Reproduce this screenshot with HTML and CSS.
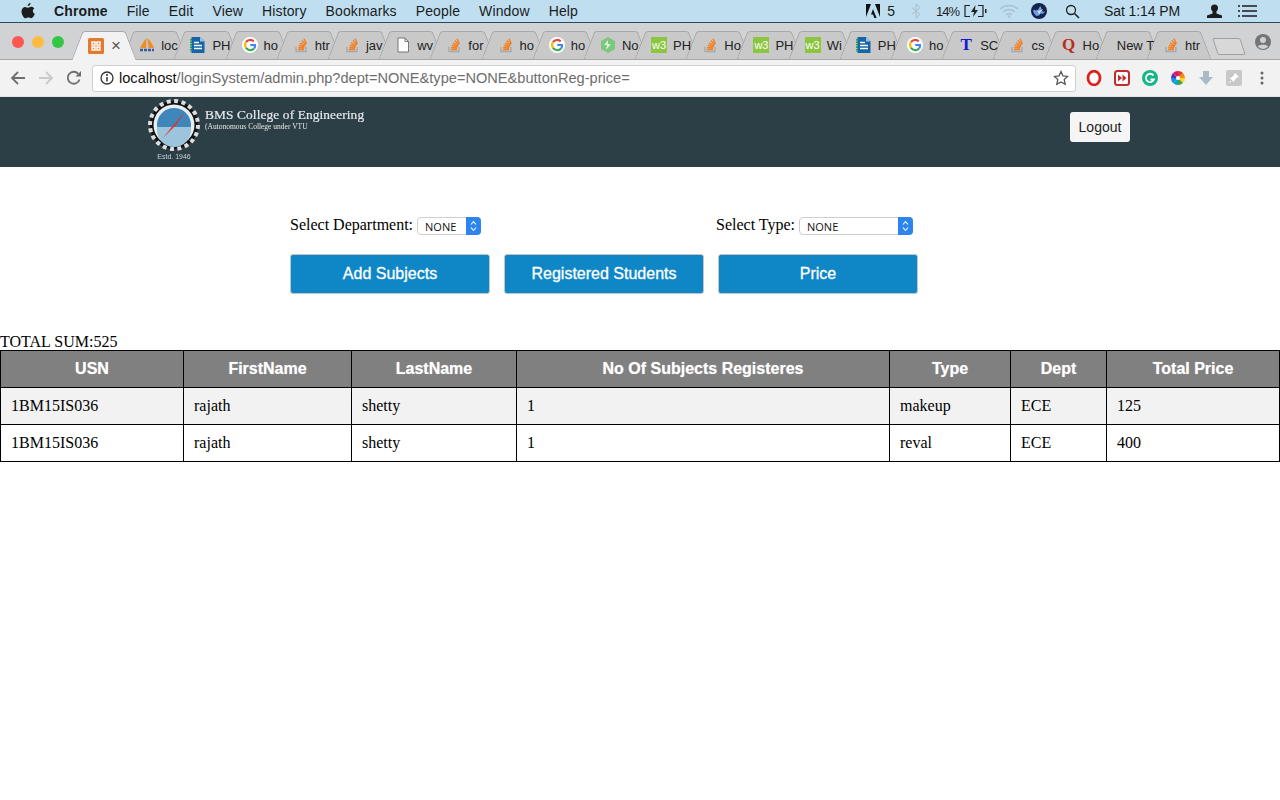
FILE: index.html
```html
<!DOCTYPE html>
<html lang="en">
  <head>
    <meta charset="UTF-8" />
    <title>Admin</title>
    <link rel="stylesheet" href="styles.css">
  </head>
  <body>
    <svg class="defs" width="0" height="0">
      <symbol id="i-so" viewBox="0 0 16 16">
        <path d="M3 10v4.500h10V10" fill="none" stroke="#a9a9a9" stroke-width="1.400"/>
        <path d="M5 12.600h6M5.200 10.400l6 .6M5.800 8.200l5.800 1.600M7 5.800l5.200 3M8.800 3.600l4 4.200M11 1.800l2.400 5" fill="none" stroke="#f48024" stroke-width="1.500"/>
      </symbol>
      <symbol id="i-g" viewBox="0 0 16 16">
        <circle cx="8" cy="8" r="8" fill="#fff"/>
        <path d="M11.700 4.400A5 5 0 0 0 4 5.200" fill="none" stroke="#ea4335" stroke-width="2.200"/>
        <path d="M4 5.200a5 5 0 0 0 0 5.600" fill="none" stroke="#fbbc05" stroke-width="2.200"/>
        <path d="M4 10.800a5 5 0 0 0 8.200.6" fill="none" stroke="#34a853" stroke-width="2.200"/>
        <path d="M12.200 11.400A5 5 0 0 0 13 8H8.200" fill="none" stroke="#4285f4" stroke-width="2.200"/>
      </symbol>
      <symbol id="i-doc" viewBox="0 0 16 16">
        <path d="M1.500 0H10l4.500 4.500V16H1.500z" fill="#1565a8"/>
        <path d="M10 0v4.500h4.500" fill="#9cc3e4"/>
        <path d="M4 5.500h5M4 8.500h8M4 11.500h8" stroke="#fff" stroke-width="1.300"/>
        <path d="M1 2v13" stroke="#1f9a58" stroke-width="2" stroke-dasharray="1.500 1"/>
      </symbol>
    </svg>

    <div class="menubar">
      <svg class="apple" viewBox="0 0 14 16" width="14" height="16">
        <path d="M9.600 0c.1 1.500-1.200 3.200-2.900 3.100C6.500 1.600 8 .1 9.600 0zM13.300 5.500c-2.100 1.300-1.800 4.300.5 5.300-.6 1.800-2.200 4.400-3.700 4.400-1 0-1.500-.6-2.700-.6s-1.800.6-2.700.6C2.800 15.200.5 11.500.5 8.400c0-2.900 1.900-4.500 3.700-4.500 1.200 0 2.100.8 2.900.8.800 0 1.800-.9 3.200-.9 1.100 0 2.300.6 3 1.700z" fill="#1c1c1c"/>
      </svg>
      <span class="menu-app">Chrome</span>
      <span>File</span>
      <span>Edit</span>
      <span>View</span>
      <span>History</span>
      <span>Bookmarks</span>
      <span>People</span>
      <span>Window</span>
      <span>Help</span>

      <div class="status">
        <svg class="st-adobe" viewBox="0 0 14 14" width="14" height="14"><path d="M0 0h5L0 13zM14 0H9l5 13zM7 5l3.600 9H8.300L7 10.500H5z" fill="#111"/></svg>
        <span class="st-five">5</span>
        <svg class="st-bt" viewBox="0 0 10 16" width="10" height="16"><path d="M1 4.500l8 7-4 3.500V1l4 3.500-8 7" fill="none" stroke="#a9bdc9" stroke-width="1"/></svg>
        <span class="st-pct">14%</span>
        <svg class="st-batt" viewBox="0 0 24 14" width="24" height="14"><path d="M7 1.500H2v11h5M15 1.500h5v11h-5" fill="none" stroke="#222" stroke-width="1.200"/><path d="M12.500 1L8 8h3l-1 5 5-7h-3z" fill="#222"/><path d="M22 5h1.500v4H22z" fill="#222"/></svg>
        <svg class="st-wifi" viewBox="0 0 20 14" width="20" height="14"><path d="M1 5a13 13 0 0 1 18 0M4 8a8.500 8.500 0 0 1 12 0M7 10.800a4 4 0 0 1 6 0" fill="none" stroke="#a9c0cd" stroke-width="1.500"/><circle cx="10" cy="12.500" r="1.300" fill="#a9c0cd"/></svg>
        <svg class="st-siri" viewBox="0 0 16 16" width="16" height="16"><circle cx="8" cy="8" r="8" fill="#16234a"/><path d="M2 8c2-4 3 3 6-3s2 7 6 3c-2 5-4 1-6 4S3 11 2 8z" fill="#6f9fe8"/><path d="M5 6c2 3 3 2 3 7 1-5 2-4 4-7-2 1-3 2-4 2S6 7 5 6z" fill="#e8e6f5"/></svg>
        <svg class="st-search" viewBox="0 0 15 15" width="15" height="15"><circle cx="6" cy="6" r="4.500" fill="none" stroke="#222" stroke-width="1.300"/><path d="M9.500 9.500L14 14" stroke="#222" stroke-width="1.600"/></svg>
        <span class="st-clock">Sat 1:14 PM</span>
        <svg class="st-user" viewBox="0 0 15 14" width="15" height="14"><circle cx="7.500" cy="4" r="3.500" fill="#1c1c1c"/><path d="M5.500 7h4v2.500l5.500 2V14H0v-2.500l5.500-2z" fill="#1c1c1c"/></svg>
        <svg class="st-list" viewBox="0 0 19 12" width="19" height="12"><path d="M0 1h2M4 1h15M0 6h2M4 6h15M0 11h2M4 11h15" stroke="#1c1c1c" stroke-width="1.500"/></svg>
      </div>
    </div>

    <div class="tabstrip">
      <div class="lights">
        <i class="light red"></i>
        <i class="light amber"></i>
        <i class="light green"></i>
      </div>
      <div class="tabs">
        <div class="tab active">
          <svg class="fav" viewBox="0 0 16 16"><rect width="16" height="16" rx="1.500" fill="#e8792c"/><path d="M4 4h3v3H4zM9 4h3v3H9zM4 9h3v3H4zM9 9h3v3H9z" fill="none" stroke="#fff" stroke-width="1.500"/></svg>
          <span class="tab-close">×</span>
        </div>
        <div class="tab">
          <svg class="fav" viewBox="0 0 16 16"><path d="M1 11C3 7 5 4 7.500 1c0 4 0 7-.5 10zM8.500 1c3 3 5 6 6.500 10H9.500z" fill="#ec8d28"/><path d="M1 13h14" stroke="#3d5a94" stroke-width="2.400" stroke-dasharray="3 1"/></svg>
          <span class="tab-title">loc</span>
        </div>
        <div class="tab"><svg class="fav"><use href="#i-doc"/></svg><span class="tab-title">PH</span></div>
        <div class="tab"><svg class="fav"><use href="#i-g"/></svg><span class="tab-title">ho</span></div>
        <div class="tab"><svg class="fav"><use href="#i-so"/></svg><span class="tab-title">htr</span></div>
        <div class="tab"><svg class="fav"><use href="#i-so"/></svg><span class="tab-title">jav</span></div>
        <div class="tab">
          <svg class="fav" viewBox="0 0 16 16"><path d="M3 1h7l3.500 3.500V15H3z" fill="#fff" stroke="#777"/><path d="M10 1v3.500h3.500" fill="none" stroke="#777"/></svg>
          <span class="tab-title">wv</span>
        </div>
        <div class="tab"><svg class="fav"><use href="#i-so"/></svg><span class="tab-title">for</span></div>
        <div class="tab"><svg class="fav"><use href="#i-so"/></svg><span class="tab-title">ho</span></div>
        <div class="tab"><svg class="fav"><use href="#i-g"/></svg><span class="tab-title">ho</span></div>
        <div class="tab">
          <svg class="fav" viewBox="0 0 16 16"><path d="M8 0l7 4v8l-7 4-7-4V4z" fill="#7dc67d"/><path d="M8 3L4 8h3l-1 5 5-6H8z" fill="#d8efd8"/></svg>
          <span class="tab-title">No</span>
        </div>
        <div class="tab"><i class="fav w3">w3</i><span class="tab-title">PH</span></div>
        <div class="tab"><svg class="fav"><use href="#i-so"/></svg><span class="tab-title">Ho</span></div>
        <div class="tab"><i class="fav w3">w3</i><span class="tab-title">PH</span></div>
        <div class="tab"><i class="fav w3">w3</i><span class="tab-title">Wi</span></div>
        <div class="tab"><svg class="fav"><use href="#i-doc"/></svg><span class="tab-title">PH</span></div>
        <div class="tab"><svg class="fav"><use href="#i-g"/></svg><span class="tab-title">ho</span></div>
        <div class="tab"><i class="fav fav-t">T</i><span class="tab-title">SC</span></div>
        <div class="tab"><svg class="fav"><use href="#i-so"/></svg><span class="tab-title">cs</span></div>
        <div class="tab"><i class="fav fav-q">Q</i><span class="tab-title">Ho</span></div>
        <div class="tab tab-plain"><span class="tab-title">New T</span></div>
        <div class="tab"><svg class="fav"><use href="#i-so"/></svg><span class="tab-title">htr</span></div>
      </div>
      <div class="newtab"></div>
      <svg class="profile" viewBox="0 0 16 16" width="16" height="16"><circle cx="8" cy="8" r="8" fill="#757575"/><circle cx="8" cy="6" r="3" fill="#d0d1d2"/><path d="M2.800 12.500c1-2.500 9.400-2.500 10.400 0A7 7 0 0 1 8 15a7 7 0 0 1-5.200-2.500z" fill="#d0d1d2"/></svg>
    </div>

    <div class="toolbar">
      <svg class="nav" viewBox="0 0 16 16" width="16" height="16"><path d="M15 8H2M8 2L2 8l6 6" fill="none" stroke="#6e6e6e" stroke-width="1.800"/></svg>
      <svg class="nav" viewBox="0 0 16 16" width="16" height="16"><path d="M1 8h13M8 2l6 6-6 6" fill="none" stroke="#c9c9c9" stroke-width="1.800"/></svg>
      <svg class="nav" viewBox="0 0 16 16" width="16" height="16"><path d="M13.500 9.500A6 6 0 1 1 12.300 3.800" fill="none" stroke="#6e6e6e" stroke-width="1.800"/><path d="M9.500 6.500H15V1z" fill="#6e6e6e"/></svg>
      <div class="omnibox">
        <svg class="info" viewBox="0 0 14 14" width="14" height="14"><circle cx="7" cy="7" r="6" fill="none" stroke="#333" stroke-width="1.300"/><path d="M7 6v4.500" stroke="#333" stroke-width="1.500"/><circle cx="7" cy="3.900" r="1" fill="#333"/></svg>
        <span class="url"><b>localhost</b>/loginSystem/admin.php?dept=NONE&amp;type=NONE&amp;buttonReg-price=</span>
        <svg class="star" viewBox="0 0 16 16" width="16" height="16"><path d="M8 1.500l2 4.400 4.700.5-3.500 3.200 1 4.700L8 11.900l-4.200 2.400 1-4.700L1.300 6.400 6 5.900z" fill="none" stroke="#555" stroke-width="1.300"/></svg>
      </div>
      <div class="extensions">
        <svg viewBox="0 0 16 16" width="16" height="16"><ellipse cx="8" cy="8" rx="6" ry="6.800" fill="#fff" stroke="#e0201c" stroke-width="2.800"/></svg>
        <svg viewBox="0 0 16 16" width="16" height="16"><rect x="1" y="1" width="14" height="14" rx="2.500" fill="#fff" stroke="#c22c2c" stroke-width="2"/><path d="M4 4.500l4 3.500-4 3.500zM8.500 4.500l4 3.500-4 3.500z" fill="#c22c2c"/></svg>
        <svg viewBox="0 0 16 16" width="16" height="16"><circle cx="8" cy="8" r="8" fill="#14b586"/><path d="M11.500 5.500A4.200 4.200 0 1 0 12 9.500H8.500" fill="none" stroke="#fff" stroke-width="1.800"/></svg>
        <svg viewBox="0 0 16 16" width="16" height="16"><path d="M8 8V1a7 7 0 0 1 5 2z" fill="#e53935"/><path d="M8 8l5-5a7 7 0 0 1 2 5z" fill="#fb8c00"/><path d="M8 8h7a7 7 0 0 1-2 5z" fill="#fdd835"/><path d="M8 8l5 5a7 7 0 0 1-5 2z" fill="#43a047"/><path d="M8 8v7a7 7 0 0 1-5-2z" fill="#00acc1"/><path d="M8 8l-5 5a7 7 0 0 1-2-5z" fill="#1e88e5"/><path d="M8 8H1a7 7 0 0 1 2-5z" fill="#5e35b1"/><path d="M8 8L3 3a7 7 0 0 1 5-2z" fill="#d81b60"/><circle cx="8" cy="8" r="2" fill="#fff"/></svg>
        <svg viewBox="0 0 16 16" width="16" height="16"><path d="M5 1h6v6h4l-7 8-7-8h4z" fill="#a9bcc6"/></svg>
        <svg viewBox="0 0 16 16" width="16" height="16"><rect width="16" height="16" rx="2" fill="#c8c8c8"/><path d="M9 3l4 4-2 .5-2.500 2.500-.5 2L3.500 8l2-.5L8 5z" fill="#fff"/><path d="M5 11l-2 2" stroke="#fff"/></svg>
        <svg viewBox="0 0 4 14" width="4" height="14"><circle cx="2" cy="2" r="1.500" fill="#666"/><circle cx="2" cy="7" r="1.500" fill="#666"/><circle cx="2" cy="12" r="1.500" fill="#666"/></svg>
      </div>
    </div>

    <header class="site-header">
      <div class="logo">
        <div class="logo-mark">
          <svg viewBox="0 0 54 54" width="54" height="54">
            <circle cx="27" cy="27" r="24" fill="#111" stroke="#ddd" stroke-width="4" stroke-dasharray="4 3.500"/>
            <circle cx="27" cy="27" r="20.500" fill="#e8edf0"/>
            <circle cx="27" cy="27" r="17" fill="#3f86bb"/>
            <path d="M10 29h34v3a17 17 0 0 1-34 0z" fill="#9cc4dc"/>
            <path d="M38 14L24 30l-8 10 13-13z" fill="#e8302a"/>
          </svg>
          <span class="estd">Estd. 1946</span>
        </div>
        <div class="logo-text">
          <div class="logo-name">BMS College of Engineering</div>
          <div class="logo-sub">(Autonomous College under VTU</div>
        </div>
      </div>
      <button class="logout">Logout</button>
    </header>

    <form class="controls">
      <div class="selects">
        <label class="select-label dept">Select Department:
          <span class="select-wrap dept-select">
            <select><option>NONE</option></select>
            <svg class="select-arrow" viewBox="0 0 15 18" width="15" height="18"><path d="M5 7.500l2.500-3 2.500 3M5 10.500l2.500 3 2.500-3" fill="none" stroke="#fff" stroke-width="1.100"/></svg>
          </span>
        </label>
        <label class="select-label">Select Type:
          <span class="select-wrap type-select">
            <select><option>NONE</option></select>
            <svg class="select-arrow" viewBox="0 0 15 18" width="15" height="18"><path d="M5 7.500l2.500-3 2.500 3M5 10.500l2.500 3 2.500-3" fill="none" stroke="#fff" stroke-width="1.100"/></svg>
          </span>
        </label>
      </div>
      <div class="actions">
        <button type="button" class="action">Add Subjects</button>
        <button type="button" class="action">Registered Students</button>
        <button type="button" class="action">Price</button>
      </div>
    </form>

    <div class="total">TOTAL SUM:525</div>
    <table class="results">
      <colgroup>
        <col class="c-usn" /><col class="c-first" /><col class="c-last" /><col class="c-num" /><col class="c-type" /><col class="c-dept" /><col />
      </colgroup>
      <tr>
        <th>USN</th>
        <th>FirstName</th>
        <th>LastName</th>
        <th>No Of Subjects Registeres</th>
        <th>Type</th>
        <th>Dept</th>
        <th>Total Price</th>
      </tr>
      <tr>
        <td>1BM15IS036</td>
        <td>rajath</td>
        <td>shetty</td>
        <td>1</td>
        <td>makeup</td>
        <td>ECE</td>
        <td>125</td>
      </tr>
      <tr>
        <td>1BM15IS036</td>
        <td>rajath</td>
        <td>shetty</td>
        <td>1</td>
        <td>reval</td>
        <td>ECE</td>
        <td>400</td>
      </tr>
    </table>
  </body>
</html>
```

FILE: styles.css
```css
body {
  margin: 0;
  font-family: "Liberation Serif", serif;
  font-size: 16px;
  color: #000;
  background-color: #fff;
}
.defs {
  display: block;
  height: 0;
}

/* mac menu bar */
.menubar {
  display: flex;
  align-items: center;
  gap: 19px;
  height: 22px;
  padding-left: 21px;
  background-color: #bfdff1;
  font-family: "Liberation Sans", sans-serif;
  font-size: 14px;
  color: #1c1c1c;
}
.menubar > span {
  letter-spacing: 0.13px;
}
.menu-app {
  font-weight: bold;
}
.status {
  display: flex;
  align-items: center;
  margin-left: auto;
  padding-right: 23px;
}
.st-five { margin-left: 7px; }
.st-bt { margin-left: 16px; }
.st-pct { margin-left: 15px; font-size: 13px; letter-spacing: -1px; }
.st-batt { margin-left: 4px; }
.st-wifi { margin-left: 12px; }
.st-siri { margin-left: 12px; }
.st-search { margin-left: 18px; }
.st-clock { margin-left: 24px; letter-spacing: -0.1px; }
.st-user { margin-left: 27px; }
.st-list { margin-left: 16px; }

/* tab strip */
.tabstrip {
  display: flex;
  align-items: flex-end;
  height: 36px;
  border-top: 1px solid #2b4a5c;
  border-bottom: 1px solid #a8a8a8;
  background-color: #d0d2d3;
  position: relative;
  font-family: "Liberation Sans", sans-serif;
  font-size: 13px;
  color: #222;
}
.lights {
  display: flex;
  gap: 8px;
  width: 77px;
  height: 36px;
  padding: 13px 0 0 12px;
  box-sizing: border-box;
  flex-shrink: 0;
}
.light {
  width: 12px;
  height: 12px;
  border-radius: 50%;
}
.red { background-color: #fc5753; }
.amber { background-color: #fdbc40; }
.green { background-color: #33c748; }
.tabs {
  display: flex;
}
.tab {
  position: relative;
  display: flex;
  align-items: center;
  width: 51.2px;
  height: 28px;
  padding-left: 11px;
  box-sizing: border-box;
}
.tab::before,
.tab::after {
  content: "";
  position: absolute;
  top: 0;
  bottom: 0;
  width: 36px;
  background-color: #c9c9c9;
  border-top: 1px solid #a8a8a8;
  z-index: 1;
}
.tab::before {
  left: 0;
  border-left: 1px solid #a0a0a0;
  border-top-left-radius: 3px;
  transform: skewX(-21deg);
}
.tab::after {
  right: -3px;
  border-right: 1px solid #a0a0a0;
  border-top-right-radius: 3px;
  transform: skewX(21deg);
}
.tab.active {
  height: 29px;
  margin-bottom: -1px;
}
.tab.active::before,
.tab.active::after {
  background-color: #f2f2f2;
  z-index: 2;
}
.tab-plain {
  padding-left: 16px;
}
.fav {
  position: relative;
  z-index: 3;
  display: block;
  flex-shrink: 0;
  width: 16px;
  height: 16px;
  font-style: normal;
}
.w3 {
  background-color: #8cc63f;
  color: #fff;
  font-size: 11px;
  line-height: 16px;
  text-align: center;
}
.fav-t {
  font-family: "Liberation Serif", serif;
  font-size: 17px;
  font-weight: bold;
  line-height: 16px;
  text-align: center;
  color: #1515d8;
}
.fav-q {
  font-family: "Liberation Serif", serif;
  font-size: 17px;
  font-weight: bold;
  line-height: 16px;
  text-align: center;
  color: #b92b1b;
}
.tab-title {
  position: relative;
  z-index: 3;
  margin-left: 6px;
  white-space: nowrap;
}
.tab-plain .tab-title {
  margin-left: 0;
}
.tab-close {
  position: relative;
  z-index: 3;
  margin-left: 7px;
  font-size: 17px;
  color: #555;
}
.newtab {
  width: 26px;
  height: 15px;
  margin: 0 0 4px 12px;
  border: 1px solid #a0a0a0;
  border-radius: 2px;
  background-color: #d8d8d8;
  transform: skewX(18deg);
}
.profile {
  position: absolute;
  top: 11px;
  right: 9px;
}

/* toolbar */
.toolbar {
  display: flex;
  align-items: center;
  gap: 12px;
  height: 36px;
  padding-left: 10px;
  background-color: #f2f2f2;
  font-family: "Liberation Sans", sans-serif;
}
.omnibox {
  display: flex;
  align-items: center;
  width: 984px;
  height: 27px;
  margin-left: -2px;
  padding: 0 6px 0 7px;
  box-sizing: border-box;
  background-color: #fff;
  border: 1px solid #cfcfcf;
  border-radius: 3px;
}
.url {
  margin-left: 5px;
  font-size: 14.6px;
  color: #6d6d6d;
}
.url b {
  font-weight: normal;
  color: #111;
}
.star {
  margin-left: auto;
}
.extensions {
  display: flex;
  align-items: center;
  gap: 12px;
  margin-left: -2px;
}
.extensions svg:last-child {
  margin-left: 6px;
}

/* site header */
.site-header {
  display: flex;
  align-items: flex-start;
  justify-content: space-between;
  height: 71px;
  padding: 1px 150px 0 147px;
  box-sizing: border-box;
  border-top: 1px solid #e4e4e4;
  background-color: #2c3e46;
}
.logo {
  display: flex;
  filter: blur(0.3px);
}
.logo-mark {
  display: flex;
  flex-direction: column;
  align-items: center;
  width: 54px;
  color: #c9d0d3;
}
.estd {
  font-family: "Liberation Sans", sans-serif;
  font-size: 7px;
  margin-top: 1px;
}
.logo-text {
  margin: 10px 0 0 4px;
  color: #e6e9ea;
}
.logo-name {
  font-size: 13.4px;
  line-height: 14px;
  letter-spacing: 0.1px;
  -webkit-text-stroke: 0.2px #e6e9ea;
}
.logo-sub {
  margin-top: 1px;
  font-size: 7.5px;
  line-height: 8px;
}
.logout {
  width: 60px;
  height: 30px;
  margin-top: 14px;
  padding: 0;
  background-color: #f5f5f5;
  border: none;
  border-radius: 3px;
  font-family: "Liberation Sans", sans-serif;
  font-size: 14px;
  color: #222;
}

/* dept and type form */
.controls {
  width: 628px;
  margin-left: 290px;
  padding-top: 48px;
}
.selects {
  display: flex;
  height: 39px;
}
.select-label {
  display: flex;
  align-items: flex-start;
  gap: 4px;
  line-height: 20px;
}
.dept {
  width: 426px;
}
.select-wrap {
  position: relative;
  display: block;
  height: 18px;
  margin-top: 2px;
}
.select-arrow {
  position: absolute;
  top: 0;
  right: 0;
  border-radius: 0 4px 4px 0;
  background-color: #2d84f0;
}
.select-wrap select {
  display: block;
  width: 100%;
  height: 18px;
  padding: 0 0 0 7px;
  appearance: none;
  background-color: #fff;
  border: 1px solid #cfcfcf;
  border-radius: 4px;
  box-sizing: border-box;
  font-family: "Open Sans", sans-serif;
  font-size: 11px;
  color: #111;
}
.dept-select { width: 64px; }
.type-select { width: 114px; }
.actions {
  display: flex;
  gap: 14px;
}
.action {
  width: 200px;
  height: 40px;
  padding: 0;
  background-color: #0f87c7;
  border: 1px solid #c4c4c4;
  border-radius: 3px;
  font-family: "Liberation Sans", sans-serif;
  font-size: 16px;
  color: #fff;
  -webkit-text-stroke: 0.3px #fff;
}

/* results */
.total {
  margin-top: 39px;
  line-height: 17px;
}
.results {
  width: 100%;
  table-layout: fixed;
  border-collapse: collapse;
}
.c-usn { width: 183px; }
.c-first { width: 168px; }
.c-last { width: 165px; }
.c-num { width: 373px; }
.c-type { width: 121px; }
.c-dept { width: 96px; }
.results th,
.results td {
  height: 37px;
  padding: 0 10px;
  border: 1px solid #000;
  box-sizing: border-box;
}
.results th {
  background-color: #808080;
  font-family: "Liberation Sans", sans-serif;
  font-size: 16px;
  font-weight: bold;
  color: #fff;
  padding-bottom: 1px;
  text-shadow: 0 0 1px rgba(255, 255, 255, 0.6);
}
.results tr:nth-child(2) td {
  background-color: #f2f2f2;
}
```
